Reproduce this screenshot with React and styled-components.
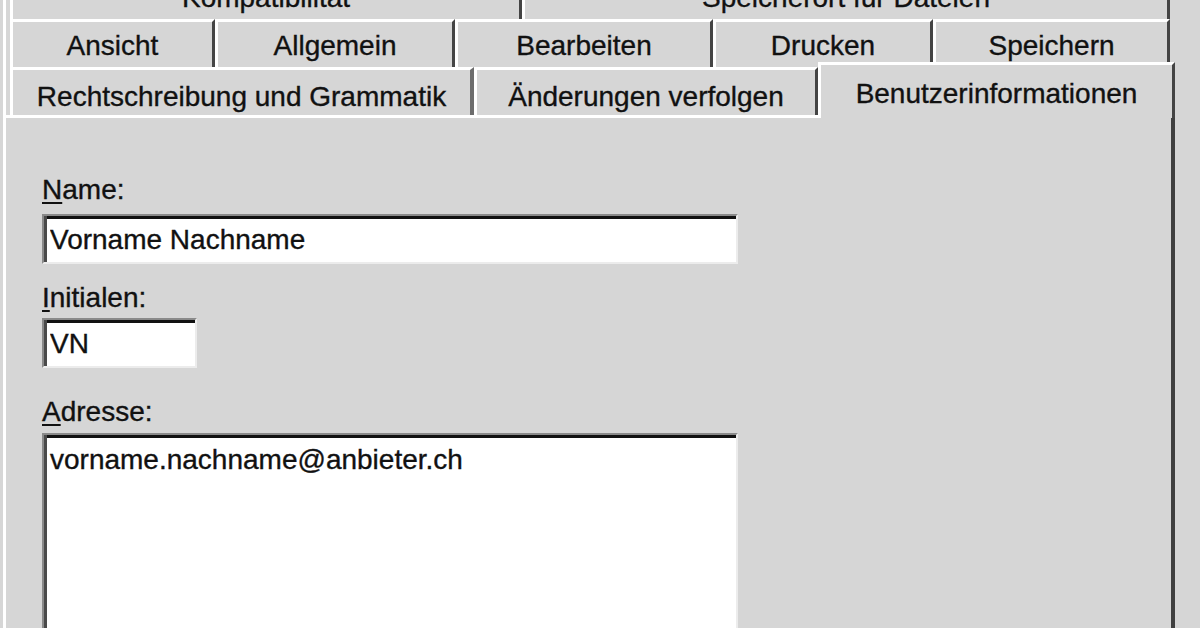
import React from 'react';
import styled, { createGlobalStyle } from 'styled-components';

const GlobalStyle = createGlobalStyle`
  html, body {
    margin: 0;
    padding: 0;
    background: #d6d6d6;
  }
  body {
    font-family: "Liberation Sans", Arial, sans-serif;
    color: #111;
  }
`;

const Screen = styled.div`
  width: 1200px;
  height: 628px;
  overflow: hidden;
  background: #d6d6d6;
  padding-left: 3px;
  box-sizing: border-box;
`;

// dialog body: the top row of tabs is cut off by the screenshot
const Frame = styled.div`
  width: 1172px;
  height: 657px;
  margin-top: -29px;
  border-left: 3px solid #fff;
  box-sizing: border-box;
  display: flex;
  flex-direction: column;
`;

const TabRow = styled.div`
  display: flex;
  align-items: flex-end;
  height: 48px;
  padding-left: 4px;
  flex: none;
`;

const Tab = styled.div`
  box-sizing: border-box;
  flex: none;
  width: ${p => p.$w}px;
  height: ${p => (p.$active ? 56 : 48)}px;
  margin-bottom: ${p => (p.$active ? '-3px' : '0')};
  position: relative;
  z-index: ${p => (p.$active ? 1 : 0)};
  display: flex;
  align-items: center;
  justify-content: center;
  padding-top: ${p => p.$pad}px;
  background: #d6d6d6;
  border-top: 3px solid #fff;
  border-left: 3px solid #fff;
  border-right: ${p => (p.$soft ? '4px solid #6c6c6c' : '3px solid #444')};
  font-size: 28px;
  line-height: 30px;
  white-space: nowrap;
  -webkit-text-stroke: 0.35px #111;
`;

const Panel = styled.div`
  flex: 1;
  border-top: 3px solid #fff;
  border-right: 4px solid #404040;
  padding: 57px 0 0 36px;
  display: flex;
  flex-direction: column;
  align-items: flex-start;
`;

const Field = styled.div`
  display: flex;
  flex-direction: column;
  gap: ${p => p.$gap}px;
  margin-bottom: ${p => p.$mb || 0}px;
`;

const Label = styled.label`
  font-size: 28px;
  line-height: 30px;
  -webkit-text-stroke: 0.35px #111;
  u {
    text-decoration-thickness: 2px;
    text-underline-offset: 3px;
  }
`;

const sunken = `
  box-sizing: border-box;
  background: #fff;
  border-style: solid;
  border-width: 2px;
  border-color: #8a8a8a #ececec #ececec #8a8a8a;
  box-shadow: inset 3px 0 0 #4a4a4a, inset 0 3px 0 #111;
  font-family: "Liberation Sans", Arial, sans-serif;
  font-size: 28px;
  line-height: 30px;
  color: #111;
  -webkit-text-stroke: 0.35px #111;
  outline: none;
  margin: 0;
`;

const TextBox = styled.input`
  ${sunken}
  width: ${p => p.$w}px;
  height: 50px;
  padding: 2px 6px 0;
`;

const TextArea = styled.textarea`
  ${sunken}
  width: 696px;
  height: 220px;
  padding: 10px 6px;
  resize: none;
  overflow: hidden;
`;

const rows = [
  {
    pad: 3,
    tabs: [
      { label: 'Kompatibilität', w: 512 },
      { label: 'Speicherort für Dateien', w: 648 },
    ],
  },
  {
    pad: 3,
    tabs: [
      { label: 'Ansicht', w: 205 },
      { label: 'Allgemein', w: 240 },
      { label: 'Bearbeiten', w: 258 },
      { label: 'Drucken', w: 220 },
      { label: 'Speichern', w: 237 },
    ],
  },
  {
    pad: 9,
    tabs: [
      { label: 'Rechtschreibung und Grammatik', w: 464, soft: true },
      { label: 'Änderungen verfolgen', w: 344 },
      { label: 'Benutzerinformationen', w: 357, active: true },
    ],
  },
];

export default function App() {
  return (
    <>
      <GlobalStyle />
      <Screen>
        <Frame>
          {rows.map((row, i) => (
            <TabRow key={i}>
              {row.tabs.map(t => (
                <Tab
                  key={t.label}
                  $w={t.w}
                  $active={t.active}
                  $soft={t.soft}
                  $pad={t.active ? 4 : row.pad}
                >
                  {t.label}
                </Tab>
              ))}
            </TabRow>
          ))}
          <Panel>
            <Field $gap={9} $mb={19}>
              <Label><u>N</u>ame:</Label>
              <TextBox $w={696} readOnly defaultValue="Vorname Nachname" />
            </Field>
            <Field $gap={5} $mb={29}>
              <Label><u>I</u>nitialen:</Label>
              <TextBox $w={155} readOnly defaultValue="VN" />
            </Field>
            <Field $gap={6}>
              <Label><u>A</u>dresse:</Label>
              <TextArea readOnly defaultValue="vorname.nachname@anbieter.ch" />
            </Field>
          </Panel>
        </Frame>
      </Screen>
    </>
  );
}
